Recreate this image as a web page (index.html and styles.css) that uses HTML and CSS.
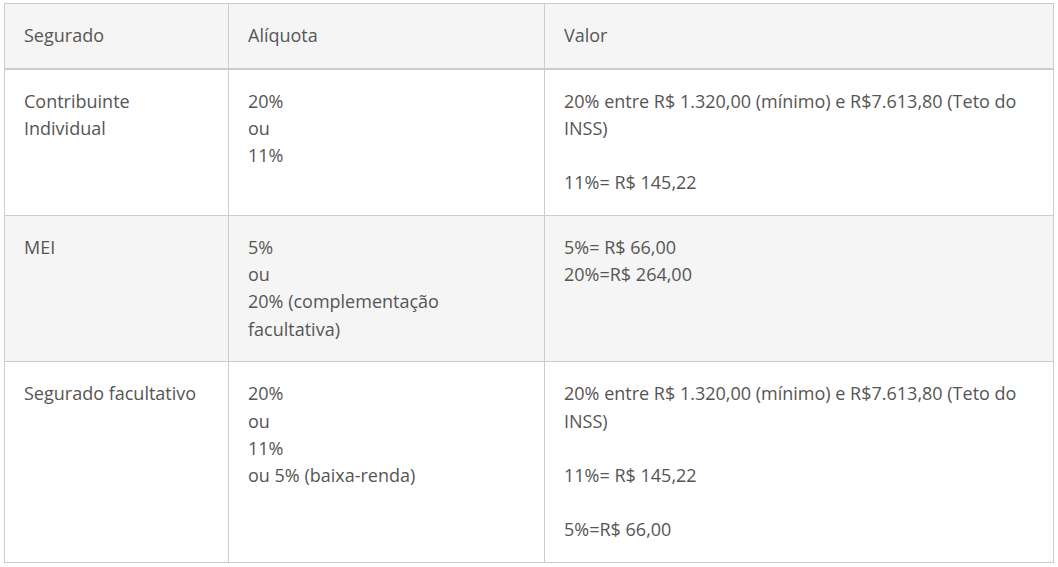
FILE: index.html
```html
<!DOCTYPE html>
<html lang="pt">
<head>
<meta charset="utf-8">
<link rel="stylesheet" href="styles.css">
</head>
<body>
<div class="wrap">
<table class="tbl">
  <colgroup>
    <col class="c1"><col class="c2"><col class="c3">
  </colgroup>
  <thead>
    <tr><th>Segurado</th><th>Alíquota</th><th>Valor</th></tr>
  </thead>
  <tbody>
    <tr>
      <td>Contribuinte Individual</td>
      <td>20%<br>ou<br>11%</td>
      <td>20% entre R$ 1.320,00 (mínimo) e R$7.613,80 (Teto do INSS)<br><br>11%= R$ 145,22</td>
    </tr>
    <tr class="alt">
      <td>MEI</td>
      <td>5%<br>ou<br>20% (complementação facultativa)</td>
      <td>5%= R$ 66,00<br>20%=R$ 264,00</td>
    </tr>
    <tr>
      <td>Segurado facultativo</td>
      <td>20%<br>ou<br>11%<br>ou 5% (baixa-renda)</td>
      <td>20% entre R$ 1.320,00 (mínimo) e R$7.613,80 (Teto do INSS)<br><br>11%= R$ 145,22<br><br>5%=R$ 66,00</td>
    </tr>
  </tbody>
</table>
</div>
</body>
</html>
```

FILE: styles.css
```css
html, body {
  margin: 0;
  padding: 0;
  background: #ffffff;
}
.wrap {
  padding: 3px 0 0 4px;
}
.tbl {
  width: 1049px;
  border-collapse: collapse;
  table-layout: fixed;
  font-family: "Open Sans", "Liberation Sans", sans-serif;
  font-size: 18px;
  line-height: 27.2px;
  color: #555555;
}
.c1 { width: 224px; }
.c2 { width: 316px; }
.c3 { width: 509px; }
.tbl th,
.tbl td {
  border: 1px solid #cccccc;
  padding: 18px 19px 18.5px 19px;
  text-align: left;
  vertical-align: top;
  font-weight: 400;
}
.tbl thead th {
  background: #f5f5f5;
  border-bottom: 2px solid #cccccc;
}
.tbl tr.alt td {
  background: #f5f5f5;
}
```
